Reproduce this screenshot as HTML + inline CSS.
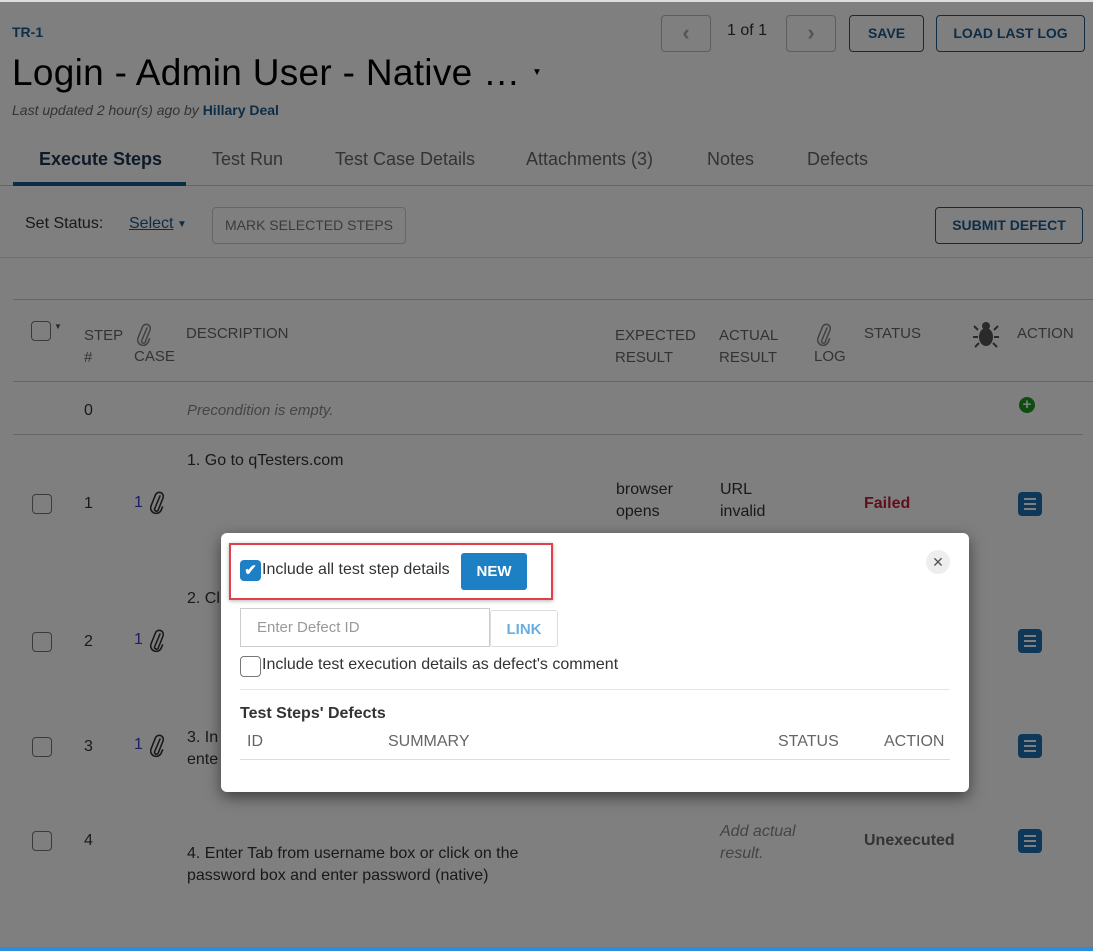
<!DOCTYPE html>
<html><head><meta charset="utf-8"><style>
*{box-sizing:border-box;margin:0;padding:0}
body{width:1093px;height:951px;overflow:hidden;position:relative;background:#fff;font-family:"Liberation Sans",sans-serif;color:#333;font-size:16px}
.a{position:absolute;white-space:nowrap}
.btn{position:absolute;border:1px solid #1b5b8e;border-radius:4px;color:#1b5b8e;font-weight:bold;font-size:14px;text-align:center}
.hd{color:#666;font-size:15px}
.cb{position:absolute;width:20px;height:20px;border:1px solid #777;border-radius:4px;background:#fff}
.menu{position:absolute;width:24px;height:24px;background:#1d6fb0;border-radius:4px}
.menu i{position:absolute;left:6px;width:12px;height:2px;background:#fff}
.clip{position:absolute}
#ov{position:absolute;left:0;top:0;width:1093px;height:951px;background:rgba(0,0,0,.5)}
</style></head><body>
<svg width="0" height="0" style="position:absolute"><defs>
<symbol id="cl" viewBox="0 0 14 26"><path d="M10 6 L4.5 19 A2 2 0 0 0 8 20.5 L13 8 A4 4 0 0 0 5.5 4.8 L1 16 A5.5 5.5 0 0 0 11 20.5 L12.5 17" fill="none" stroke="currentColor" stroke-width="1.6" stroke-linecap="round"/></symbol>
</defs></svg>
<div class="a" style="left:12px;top:24px;font-size:14px;font-weight:bold;color:#1b5b8e">TR-1</div>
<div class="a" style="left:12px;top:52px;font-size:37px;color:#000;letter-spacing:0.3px">Login - Admin User - Native …</div>
<div class="a" style="left:532px;top:67px;font-size:10px;color:#000">▼</div>
<div class="a" style="left:12px;top:102px;font-size:14px;font-style:italic;color:#666">Last updated 2 hour(s) ago by <b style="font-style:normal;color:#1b5b8e">Hillary Deal</b></div>
<div class="btn" style="left:661px;top:15px;width:50px;height:37px;border-color:#bbb;color:#aaa;line-height:34px;font-size:22px">&lsaquo;</div>
<div class="a" style="left:727px;top:22px;font-size:16px">1 of 1</div>
<div class="btn" style="left:786px;top:15px;width:50px;height:37px;border-color:#bbb;color:#aaa;line-height:34px;font-size:22px">&rsaquo;</div>
<div class="btn" style="left:849px;top:15px;width:75px;height:37px;line-height:35px">SAVE</div>
<div class="btn" style="left:936px;top:15px;width:149px;height:37px;line-height:35px">LOAD LAST LOG</div>
<div class="a" style="left:0;top:185px;width:1093px;height:1px;background:#ccc"></div>
<div class="a" style="left:13px;top:182px;width:173px;height:4px;background:#145a8c"></div>
<div class="a" style="left:39px;top:149px;font-size:18px;font-weight:bold;color:#1a3550">Execute Steps</div>
<div class="a hd" style="left:212px;top:149px;font-size:18px">Test Run</div>
<div class="a hd" style="left:335px;top:149px;font-size:18px">Test Case Details</div>
<div class="a hd" style="left:526px;top:149px;font-size:18px">Attachments (3)</div>
<div class="a hd" style="left:707px;top:149px;font-size:18px">Notes</div>
<div class="a hd" style="left:807px;top:149px;font-size:18px">Defects</div>
<div class="a" style="left:25px;top:215px;font-size:16px">Set Status:</div>
<div class="a" style="left:129px;top:215px;font-size:16px;color:#1b5b8e;text-decoration:underline">Select</div><div class="a" style="left:177px;top:219px;font-size:10px;color:#1b5b8e">▼</div>
<div class="btn" style="left:212px;top:207px;width:194px;height:37px;border-color:#ccc;color:#777;font-weight:normal;line-height:35px">MARK SELECTED STEPS</div>
<div class="btn" style="left:935px;top:207px;width:148px;height:37px;line-height:35px">SUBMIT DEFECT</div>
<div class="a" style="left:0;top:257px;width:1093px;height:1px;background:#ddd"></div>
<div class="a" style="left:13px;top:299px;width:1080px;height:1px;background:#ccc"></div>
<div class="cb" style="left:31px;top:321px"></div><div class="a" style="left:54px;top:322px;font-size:8px;color:#555">▼</div>
<div class="a hd" style="left:84px;top:325px;line-height:22px">STEP<br>#</div>
<div class="a hd" style="left:134px;top:348px">CASE</div><svg class="clip" style="left:137px;top:322px;color:#888" width="14" height="26"><use href="#cl"/></svg>
<div class="a hd" style="left:186px;top:325px">DESCRIPTION</div>
<div class="a hd" style="left:615px;top:325px;line-height:22px">EXPECTED<br>RESULT</div>
<div class="a hd" style="left:719px;top:325px;line-height:22px">ACTUAL<br>RESULT</div>
<div class="a hd" style="left:814px;top:348px">LOG</div><svg class="clip" style="left:817px;top:322px;color:#888" width="14" height="26"><use href="#cl"/></svg>
<div class="a hd" style="left:864px;top:325px">STATUS</div>
<svg class="a" style="left:973px;top:320px" width="26" height="28" viewBox="0 0 26 28"><g fill="#555" stroke="#555" stroke-width="2"><ellipse cx="13" cy="17" rx="7" ry="9" stroke="none"/><circle cx="13" cy="6" r="4" stroke="none"/><path d="M5 10 L1 6 M21 10 L25 6 M5 17 H0 M21 17 H26 M6 23 L2 27 M20 23 L24 27" fill="none"/></g></svg>
<div class="a hd" style="left:1017px;top:325px">ACTION</div>
<div class="a" style="left:13px;top:381px;width:1080px;height:1px;background:#ccc"></div>
<div class="a" style="left:84px;top:402px;font-size:16px">0</div>
<div class="a" style="left:187px;top:402px;font-size:15px;font-style:italic;color:#888">Precondition is empty.</div>
<div class="a" style="left:1019px;top:397px;width:16px;height:16px;border-radius:50%;background:#1a9a1a;color:#fff;font-size:15px;line-height:16px;text-align:center;font-weight:bold">+</div>
<div class="a" style="left:13px;top:434px;width:1070px;height:1px;background:#ccc"></div>
<div class="a" style="left:187px;top:452px">1. Go to qTesters.com</div>
<div class="cb" style="left:32px;top:494px"></div><div class="a" style="left:84px;top:495px">1</div>
<div class="a" style="left:134px;top:494px;color:#3a3ad0">1</div><svg class="clip" style="left:150px;top:490px;color:#333" width="14" height="26"><use href="#cl"/></svg>
<div class="a" style="left:616px;top:479px;line-height:22px">browser<br>opens</div>
<div class="a" style="left:720px;top:479px;line-height:22px">URL<br>invalid</div>
<div class="a" style="left:864px;top:495px;font-weight:bold;color:#c0203a">Failed</div>
<div class="menu" style="left:1018px;top:492px"><i style="top:6px"></i><i style="top:11px"></i><i style="top:16px"></i></div>
<div class="a" style="left:187px;top:590px">2. Cl</div>
<div class="cb" style="left:32px;top:632px"></div><div class="a" style="left:84px;top:633px">2</div>
<div class="a" style="left:134px;top:631px;color:#3a3ad0">1</div><svg class="clip" style="left:150px;top:628px;color:#333" width="14" height="26"><use href="#cl"/></svg>
<div class="menu" style="left:1018px;top:629px"><i style="top:6px"></i><i style="top:11px"></i><i style="top:16px"></i></div>
<div class="a" style="left:187px;top:727px;line-height:22px">3. In<br>ente</div>
<div class="cb" style="left:32px;top:737px"></div><div class="a" style="left:84px;top:738px">3</div>
<div class="a" style="left:134px;top:736px;color:#3a3ad0">1</div><svg class="clip" style="left:150px;top:733px;color:#333" width="14" height="26"><use href="#cl"/></svg>
<div class="menu" style="left:1018px;top:734px"><i style="top:6px"></i><i style="top:11px"></i><i style="top:16px"></i></div>
<div class="cb" style="left:32px;top:831px"></div><div class="a" style="left:84px;top:832px">4</div>
<div class="a" style="left:187px;top:843px;line-height:22px">4. Enter Tab from username box or click on the<br>password box and enter password (native)</div>
<div class="a" style="left:720px;top:821px;line-height:22px;font-style:italic;color:#888">Add actual<br>result.</div>
<div class="a" style="left:864px;top:832px;font-weight:bold;color:#666">Unexecuted</div>
<div class="menu" style="left:1018px;top:829px"><i style="top:6px"></i><i style="top:11px"></i><i style="top:16px"></i></div>
<div id="ov"></div>
<div class="a" style="left:0;top:947px;width:1093px;height:4px;background:#2a8ee0"></div>
<div class="a" style="left:0;top:0;width:1093px;height:2px;background:#ddd"></div>
<!-- modal -->
<div class="a" style="left:221px;top:533px;width:748px;height:259px;background:#fff;border-radius:6px;box-shadow:0 5px 15px rgba(0,0,0,.5)">
 <div class="a" style="left:8px;top:10px;width:324px;height:57px;border:2px solid #e0404a;box-shadow:0 1px 4px rgba(0,0,0,.3)"></div>
 <div class="a" style="left:19px;top:27px;width:21px;height:21px;border-radius:4px;background:#1d7fc4;color:#fff;font-size:15px;text-align:center;line-height:21px;font-weight:bold">✔</div>
 <div class="a" style="left:41px;top:28px;font-size:16px;color:#333">Include all test step details</div>
 <div class="a" style="left:240px;top:20px;width:66px;height:37px;background:#1d7fc4;border-radius:3px;color:#fff;font-weight:bold;font-size:15px;text-align:center;line-height:37px">NEW</div>
 <div class="a" style="left:705px;top:17px;width:24px;height:24px;border-radius:50%;background:#eee;color:#555;text-align:center;line-height:24px;font-size:14px">✕</div>
 <div class="a" style="left:19px;top:75px;width:250px;height:39px;border:1px solid #ccc;color:#999;font-size:15px;padding:10px 16px">Enter Defect ID</div>
 <div class="a" style="left:269px;top:77px;width:68px;height:37px;border:1px solid #ddd;border-radius:3px;color:#6aaee0;font-weight:bold;font-size:15px;text-align:center;line-height:37px">LINK</div>
 <div class="cb" style="left:19px;top:123px;width:21px;height:21px"></div>
 <div class="a" style="left:41px;top:123px;font-size:16px">Include test execution details as defect's comment</div>
 <div class="a" style="left:19px;top:156px;width:710px;height:1px;background:#e5e5e5"></div>
 <div class="a" style="left:19px;top:172px;font-weight:bold;font-size:16px;color:#333">Test Steps' Defects</div>
 <div class="a hd" style="left:26px;top:200px;font-size:16px">ID</div>
 <div class="a hd" style="left:167px;top:200px;font-size:16px">SUMMARY</div>
 <div class="a hd" style="left:557px;top:200px;font-size:16px">STATUS</div>
 <div class="a hd" style="left:663px;top:200px;font-size:16px">ACTION</div>
 <div class="a" style="left:19px;top:226px;width:710px;height:1px;background:#ddd"></div>
</div>
</body></html>
